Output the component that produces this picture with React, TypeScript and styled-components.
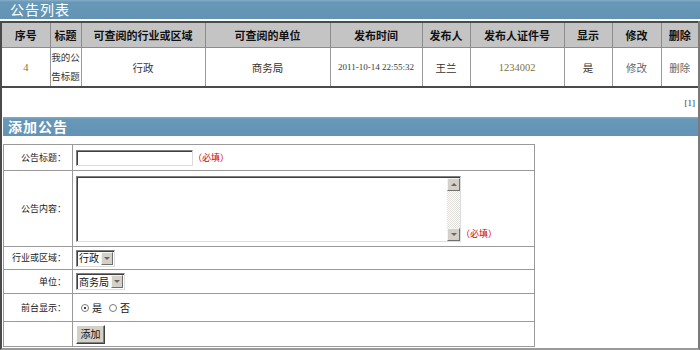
import React from "react";
import styled, { createGlobalStyle } from "styled-components";

const Global = createGlobalStyle`
  html, body { margin: 0; padding: 0; background: #fff; }
  body { font-family: "Noto Sans CJK SC", "Noto Sans", sans-serif; }
`;

const Page = styled.div`
  width: 700px;
  height: 350px;
  overflow: hidden;
  background: #fff;
`;

const TitleBar = styled.div<{ $inset?: boolean }>`
  height: 19px;
  line-height: 19px;
  margin: ${(p) => (p.$inset ? "0 0 8px 1px" : "0 0 2px 0")};
  padding-left: ${(p) => (p.$inset ? "5px" : "10px")};
  background: linear-gradient(#86aec8 0, #6898b8 2px, #6393b4 100%);
  color: #fff;
  font-size: 14px;
  font-weight: ${(p) => (p.$inset ? 700 : 400)};
  letter-spacing: 1px;
  overflow: hidden;
`;

const Panel = styled.div`
  border-left: 2px solid #4a4a4a;
  border-right: 2px solid #7a7a7a;
  border-bottom: 2px solid #9a9a9a;
  height: 329px;
  box-sizing: border-box;
`;

const ListTable = styled.table`
  width: 100%;
  border-collapse: collapse;
  table-layout: fixed;
  border-top: 2px solid #4a4a4a;
  border-bottom: 2px solid #4a4a4a;
`;

const Th = styled.th`
  height: 24px;
  padding: 0;
  background: #c4c4c4;
  border: 1px solid #8c8c8c;
  border-top: none;
  font-size: 11px;
  line-height: 14px;
  font-weight: 700;
  color: #111;
  text-align: center;
  white-space: nowrap;
  overflow: hidden;
  &:first-child { border-left: none; }
  &:last-child { border-right: none; }
`;

const Td = styled.td<{ $tone?: "olive" | "dark" | "muted"; $serif?: boolean; $small?: boolean; $tight?: boolean }>`
  height: 38px;
  padding: 0;
  border: 1px solid #9a9a9a;
  border-bottom: none;
  background: #fff;
  text-align: center;
  line-height: 19px;
  white-space: nowrap;
  overflow: hidden;
  font-size: ${(p) => (p.$small ? "9px" : p.$tight ? "9.5px" : "10.5px")};
  font-family: ${(p) =>
    p.$serif ? '"Liberation Serif", serif' : '"Noto Sans CJK SC", sans-serif'};
  color: ${(p) =>
    p.$tone === "olive" ? "#7d7440" : p.$tone === "muted" ? "#666" : p.$tone === "dark" ? "#2c3c44" : "#333"};
  &:first-child { border-left: none; }
  &:last-child { border-right: none; }
`;

const Pager = styled.div`
  height: 29px;
  display: flex;
  align-items: center;
  justify-content: flex-end;
  padding-right: 3px;
  font-family: "Liberation Serif", serif;
  font-size: 9px;
  color: #333;
`;

const FormTable = styled.table`
  width: 532px;
  margin-left: 1px;
  border-collapse: collapse;
  table-layout: fixed;
  border: 1px solid #8f8f8f;
`;

const Tr = styled.tr<{ $h: number }>`
  height: ${(p) => p.$h}px;
`;

const Label = styled.td`
  width: 62px;
  padding: 0 6px 0 0;
  border: 1px solid #9a9a9a;
  text-align: right;
  font-size: 9px;
  line-height: 12px;
  color: #222;
  white-space: nowrap;
`;

const Field = styled.td`
  padding: 0 0 0 3px;
  border: 1px solid #9a9a9a;
  text-align: left;
  font-size: 9px;
  line-height: 12px;
  color: #222;
`;

const TextInput = styled.input`
  box-sizing: border-box;
  width: 117px;
  height: 16px;
  margin: 0;
  padding: 0 2px;
  vertical-align: middle;
  border: 1px solid;
  border-color: #7f7f7f #dcdcdc #dcdcdc #7f7f7f;
  box-shadow: inset 1px 1px 0 #404040;
  background: #fff;
  outline: none;
`;

const Required = styled.span`
  margin-left: 0;
  color: #d40000;
  font-size: 9px;
  vertical-align: middle;
`;

const AreaBox = styled.span`
  box-sizing: border-box;
  display: inline-flex;
  width: 385px;
  height: 66px;
  vertical-align: bottom;
  border: 1px solid;
  border-color: #7f7f7f #dcdcdc #dcdcdc #7f7f7f;
  box-shadow: inset 1px 1px 0 #404040;
  padding: 1px 0 0 1px;
  background: #fff;
`;

const Area = styled.textarea`
  flex: 1;
  border: none;
  outline: none;
  resize: none;
  margin: 0;
  padding: 2px;
  background: transparent;
`;

const ScrollCol = styled.span`
  display: flex;
  flex-direction: column;
  width: 13px;
`;

const ScrollBtn = styled.span`
  box-sizing: border-box;
  height: 13px;
  background: #d4d0c8;
  border: 1px solid;
  border-color: #f4f4f4 #6f6f6f #6f6f6f #f4f4f4;
  display: flex;
  align-items: center;
  justify-content: center;
`;

const Track = styled.span`
  flex: 1;
  background: repeating-conic-gradient(#ffffff 0 25%, #e2e0da 0 50%) 0 0 / 2px 2px;
`;

const Tri = styled.span<{ $up?: boolean }>`
  width: 0;
  height: 0;
  border-left: 3px solid transparent;
  border-right: 3px solid transparent;
  ${(p) => (p.$up ? "border-bottom: 3px solid #666;" : "border-top: 3px solid #666;")}
`;

const AreaRequired = styled(Required)`
  vertical-align: bottom;
  margin-left: 0;
  position: relative;
  top: -2px;
`;

const FakeSelect = styled.span`
  box-sizing: border-box;
  display: inline-flex;
  align-items: center;
  height: 17px;
  vertical-align: middle;
  border: 1px solid;
  border-color: #7f7f7f #dcdcdc #dcdcdc #7f7f7f;
  box-shadow: inset 1px 1px 0 #404040;
  padding: 1px 1px 1px 2px;
  background: #fff;
  font-size: 10px;
  line-height: 12px;
  color: #111;
  gap: 2px;
`;

const DropBtn = styled(ScrollBtn)`
  width: 12px;
  height: 13px;
`;

const RadioGroup = styled.span`
  display: inline-flex;
  align-items: center;
  gap: 3px;
  margin-left: 5px;
  font-size: 10px;
  line-height: 12px;
  color: #111;
  vertical-align: middle;
`;

const Radio = styled.span<{ $on?: boolean }>`
  box-sizing: border-box;
  width: 8px;
  height: 8px;
  border-radius: 50%;
  border: 1px solid #7a7a7a;
  background: #fff;
  display: inline-flex;
  align-items: center;
  justify-content: center;
  margin-left: ${(p) => (p.$on ? "0" : "4px")};
  &::after {
    content: "";
    width: 2px;
    height: 2px;
    border-radius: 50%;
    background: ${(p) => (p.$on ? "#000" : "transparent")};
  }
`;

const Button = styled.button`
  box-sizing: border-box;
  width: 29px;
  height: 19px;
  padding: 0;
  margin: 0;
  vertical-align: middle;
  background: #d4d0c8;
  border: 1px solid;
  border-color: #ffffff #404040 #404040 #ffffff;
  box-shadow: inset -1px -1px 0 #808080;
  font-family: "Noto Sans CJK SC", sans-serif;
  font-size: 10px;
  line-height: 12px;
  color: #111;
`;

export default function App() {
  return (
    <Page>
      <Global />
      <TitleBar>公告列表</TitleBar>
      <Panel>
        <ListTable>
          <colgroup>
            <col style={{ width: 48 }} />
            <col style={{ width: 31 }} />
            <col style={{ width: 124 }} />
            <col style={{ width: 125 }} />
            <col style={{ width: 92 }} />
            <col style={{ width: 48 }} />
            <col style={{ width: 94 }} />
            <col style={{ width: 48 }} />
            <col style={{ width: 49 }} />
            <col style={{ width: 37 }} />
          </colgroup>
          <thead>
            <tr>
              <Th>序号</Th>
              <Th>标题</Th>
              <Th>可查阅的行业或区域</Th>
              <Th>可查阅的单位</Th>
              <Th>发布时间</Th>
              <Th>发布人</Th>
              <Th>发布人证件号</Th>
              <Th>显示</Th>
              <Th>修改</Th>
              <Th>删除</Th>
            </tr>
          </thead>
          <tbody>
            <tr>
              <Td $serif $tone="olive">4</Td>
              <Td $tight>我的公<br />告标题</Td>
              <Td>行政</Td>
              <Td>商务局</Td>
              <Td $serif $small $tone="dark">2011-10-14 22:55:32</Td>
              <Td>王兰</Td>
              <Td $serif $tone="olive">1234002</Td>
              <Td>是</Td>
              <Td $tone="muted">修改</Td>
              <Td $tone="muted">删除</Td>
            </tr>
          </tbody>
        </ListTable>
        <Pager>[1]</Pager>
        <TitleBar $inset>添加公告</TitleBar>
        <FormTable>
          <tbody>
            <Tr $h={26}>
              <Label>公告标题：</Label>
              <Field>
                <TextInput type="text" />
                <Required>（必填）</Required>
              </Field>
            </Tr>
            <Tr $h={76}>
              <Label>公告内容：</Label>
              <Field>
                <AreaBox>
                  <Area />
                  <ScrollCol>
                    <ScrollBtn><Tri $up /></ScrollBtn>
                    <Track />
                    <ScrollBtn><Tri /></ScrollBtn>
                  </ScrollCol>
                </AreaBox>
                <AreaRequired>（必填）</AreaRequired>
              </Field>
            </Tr>
            <Tr $h={23}>
              <Label>行业或区域：</Label>
              <Field>
                <FakeSelect>
                  行政
                  <DropBtn><Tri /></DropBtn>
                </FakeSelect>
              </Field>
            </Tr>
            <Tr $h={24}>
              <Label>单位：</Label>
              <Field>
                <FakeSelect>
                  商务局
                  <DropBtn><Tri /></DropBtn>
                </FakeSelect>
              </Field>
            </Tr>
            <Tr $h={28}>
              <Label>前台显示：</Label>
              <Field>
                <RadioGroup>
                  <Radio $on />是
                  <Radio />否
                </RadioGroup>
              </Field>
            </Tr>
            <Tr $h={25}>
              <Label />
              <Field>
                <Button>添加</Button>
              </Field>
            </Tr>
          </tbody>
        </FormTable>
      </Panel>
    </Page>
  );
}
